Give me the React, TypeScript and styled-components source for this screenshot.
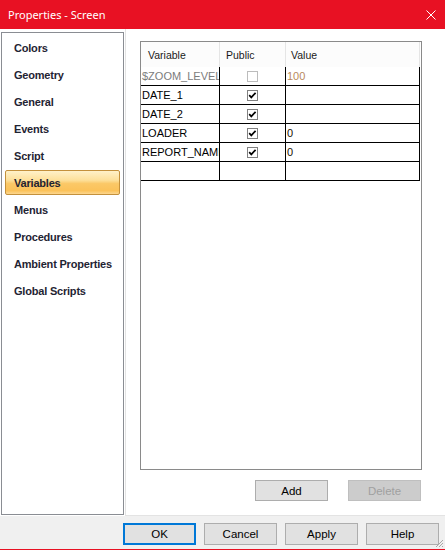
import { FC } from 'react';
import styled, { createGlobalStyle } from 'styled-components';

const GlobalStyle = createGlobalStyle`
  html, body {
    margin: 0;
    padding: 0;
    background: #ffffff;
  }
  * {
    box-sizing: border-box;
  }
`;

const Window = styled.div`
  width: 445px;
  height: 550px;
  display: flex;
  flex-direction: column;
  border-bottom: 1px solid #e81123;
  font-family: 'Liberation Sans', Arial, sans-serif;
  background: #ffffff;
`;

const TitleBar = styled.div`
  height: 29px;
  flex: none;
  background: #e81123;
  color: #ffffff;
  display: flex;
  align-items: center;
  justify-content: space-between;
  padding: 0 9px 0 8px;
  font-family: 'Noto Sans', sans-serif;
  font-size: 11px;
`;

const Body = styled.div`
  height: 487px;
  flex: none;
  display: flex;
`;

const NavPanel = styled.div`
  width: 123px;
  margin: 3px 0 1px 1px;
  border: 1px solid #8a8d93;
  background: #ffffff;
  padding: 2px 3px 0 3px;
  display: flex;
  flex-direction: column;
  gap: 2px;
`;

const NavItem = styled.div<{ $active?: boolean }>`
  height: 25px;
  display: flex;
  align-items: center;
  padding-left: 8px;
  font-size: 11px;
  font-weight: 700;
  letter-spacing: -0.2px;
  color: #1f2433;
  border: 1px solid ${(p) => (p.$active ? '#c4913c' : 'transparent')};
  border-radius: 2px;
  background: ${(p) =>
    p.$active
      ? 'linear-gradient(#fff1c9 0%, #fde09a 40%, #fbc867 55%, #fbc25a 85%, #fcd68e 100%)'
      : 'transparent'};
`;

const Content = styled.div`
  flex: 1;
  margin-left: 1px;
  background: #ffffff;
  border-left: 1px solid #e3e3e3;
  border-bottom: 1px solid #e3e3e3;
  padding: 12px 23px 0 14px;
  display: flex;
  flex-direction: column;
`;

const GridBox = styled.div`
  height: 429px;
  border: 1px solid #8a8a8a;
  background: #ffffff;
`;

const GridRow = styled.div`
  display: grid;
  grid-template-columns: 79px 66px 134px;
`;

const HeadCell = styled.div<{ $pad: number }>`
  height: 25px;
  display: flex;
  align-items: center;
  padding-left: ${(p) => p.$pad}px;
  font-size: 10.5px;
  color: #1a1a1a;
  background: #fcfcfc;
  border-right: 1px solid #e5e5e5;
`;

const Cell = styled.div<{ $color?: string; $center?: boolean }>`
  height: 19px;
  display: flex;
  align-items: center;
  justify-content: ${(p) => (p.$center ? 'center' : 'flex-start')};
  padding-left: ${(p) => (p.$center ? '0' : '1px')};
  font-size: 11px;
  color: ${(p) => p.$color || '#000000'};
  border-right: 1px solid #000000;
  border-bottom: 1px solid #000000;
  white-space: nowrap;
  overflow: hidden;
`;

const CheckBox = styled.span<{ $disabled?: boolean }>`
  width: 11px;
  height: 11px;
  border: 1px solid ${(p) => (p.$disabled ? '#bcbcbc' : '#808080')};
  background: #ffffff;
  display: flex;
  align-items: center;
  justify-content: center;
`;

const ButtonRow = styled.div`
  display: flex;
  justify-content: flex-end;
  gap: 20px;
  margin-top: 10px;
  padding-right: 1px;
`;

const Button = styled.div<{ $disabled?: boolean; $primary?: boolean; $h?: number }>`
  width: 73px;
  height: ${(p) => p.$h || 22}px;
  display: flex;
  align-items: center;
  justify-content: center;
  font-size: 11.5px;
  color: ${(p) => (p.$disabled ? '#a0a0a0' : '#000000')};
  background: ${(p) => (p.$disabled ? '#cccccc' : '#e1e1e1')};
  border: ${(p) => (p.$primary ? '2px solid #0078d7' : p.$disabled ? '1px solid #bfbfbf' : '1px solid #adadad')};
`;

const Footer = styled.div`
  position: relative;
  height: 33px;
  flex: none;
  background: #f0f0f0;
  display: flex;
  justify-content: flex-end;
  align-items: flex-start;
  gap: 8px;
  padding: 7px 6px 0 0;
`;

const Grip = styled.svg`
  position: absolute;
  right: 1px;
  bottom: 1px;
`;

const Check: FC = () => (
  <svg width="9" height="9" viewBox="0 0 9 9">
    <path d="M1.2 4.2 L3.3 6.4 L7.6 1.8" fill="none" stroke="#000" strokeWidth="1.7" />
  </svg>
);

const navItems = [
  'Colors',
  'Geometry',
  'General',
  'Events',
  'Script',
  'Variables',
  'Menus',
  'Procedures',
  'Ambient Properties',
  'Global Scripts',
];

type Row = { name: string; pub: boolean | null; value: string; muted?: boolean };

const rows: Row[] = [
  { name: '$ZOOM_LEVEL', pub: false, value: '100', muted: true },
  { name: 'DATE_1', pub: true, value: '' },
  { name: 'DATE_2', pub: true, value: '' },
  { name: 'LOADER', pub: true, value: '0' },
  { name: 'REPORT_NAME', pub: true, value: '0' },
  { name: '', pub: null, value: '' },
];

const App: FC = () => {
  return (
    <>
      <GlobalStyle />
      <Window>
        <TitleBar>
          <span>Properties - Screen</span>
          <svg width="10" height="10" viewBox="0 0 10 10">
            <path d="M0.5 0.5 L9.5 9.5 M9.5 0.5 L0.5 9.5" stroke="#fff" strokeWidth="1" />
          </svg>
        </TitleBar>
        <Body>
          <NavPanel>
            {navItems.map((n) => (
              <NavItem key={n} $active={n === 'Variables'}>
                {n}
              </NavItem>
            ))}
          </NavPanel>
          <Content>
            <GridBox>
              <GridRow>
                <HeadCell $pad={7}>Variable</HeadCell>
                <HeadCell $pad={6}>Public</HeadCell>
                <HeadCell $pad={5}>Value</HeadCell>
              </GridRow>
              {rows.map((r, i) => (
                <GridRow key={i}>
                  <Cell $color={r.muted ? '#7c7c7c' : undefined}>{r.name}</Cell>
                  <Cell $center>
                    {r.pub !== null && (
                      <CheckBox $disabled={!r.pub && r.muted}>{r.pub && <Check />}</CheckBox>
                    )}
                  </Cell>
                  <Cell $color={r.muted ? '#b98a5c' : '#1a1000'}>{r.value}</Cell>
                </GridRow>
              ))}
            </GridBox>
            <ButtonRow>
              <Button $h={21}>Add</Button>
              <Button $h={21} $disabled>
                Delete
              </Button>
            </ButtonRow>
          </Content>
        </Body>
        <Footer>
          <Button $primary>OK</Button>
          <Button>Cancel</Button>
          <Button>Apply</Button>
          <Button>Help</Button>
          <Grip width="9" height="9" viewBox="0 0 9 9">
            <path d="M8 1 L1 8 M8 4 L4 8 M8 7 L7 8" stroke="#a8a8a8" strokeWidth="1" />
          </Grip>
        </Footer>
      </Window>
    </>
  );
};

export default App;
